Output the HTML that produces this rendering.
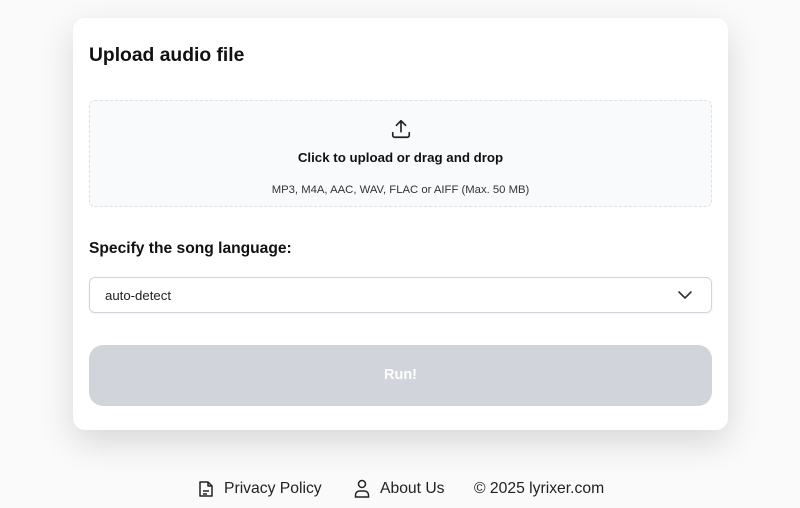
<!DOCTYPE html>
<html><head><style>
body{margin:0;width:800px;height:508px;background:#fafafa;font-family:"Liberation Sans",sans-serif;position:relative;overflow:hidden}
.card{position:absolute;left:73px;top:18px;width:655px;height:412px;background:#fff;border-radius:12px;box-shadow:0 12px 34px rgba(0,0,0,.14)}
h1{position:absolute;left:16px;top:27px;margin:0;font-size:19.3px;font-weight:bold;color:#111}
.drop{position:absolute;left:16px;top:82px;width:621px;height:105px;border:1px dashed #dde1e6;border-radius:6px;background:#f9fafb;text-align:center}
.t1{position:absolute;top:49px;width:100%;font-size:13.3px;font-weight:bold;color:#111}
.t2{position:absolute;top:83px;width:100%;font-size:11.3px;color:#333}
.lbl{position:absolute;left:16px;top:222px;font-size:15.6px;font-weight:bold;color:#111}
.sel{position:absolute;left:16px;top:259px;width:621px;height:34px;border:1px solid #d1d5db;border-radius:6px;box-shadow:0 1px 2px rgba(0,0,0,.06)}
.sel span{position:absolute;left:15px;top:10px;font-size:13.2px;color:#222}
.btn{position:absolute;left:16px;top:327px;width:623px;height:61px;border-radius:14px;background:#d1d5db;color:#fff;font-weight:bold;font-size:14.5px;text-align:center;line-height:61px}
.foot{position:absolute;top:480px;font-size:15.7px;color:#222}
</style></head><body>
<div class="card">
<h1>Upload audio file</h1>
<div class="drop">
<svg style="position:absolute;left:300px;top:17px" width="22" height="22" viewBox="0 0 24 24" fill="none" stroke="#222" stroke-width="1.8" stroke-linecap="round" stroke-linejoin="round"><path d="M12 15V3M7 8l5-5 5 5M3 16v3a2 2 0 0 0 2 2h14a2 2 0 0 0 2-2v-3"/></svg>
<div class="t1">Click to upload or drag and drop</div>
<div class="t2">MP3, M4A, AAC, WAV, FLAC or AIFF (Max. 50 MB)</div>
</div>
<div class="lbl">Specify the song language:</div>
<div class="sel"><span>auto-detect</span>
<svg style="position:absolute;right:18px;top:10px" width="16" height="14" viewBox="0 0 16 14" fill="none" stroke="#333" stroke-width="1.6" stroke-linecap="round" stroke-linejoin="round"><path d="M2 4l6 6 6-6"/></svg></div>
<div class="btn">Run!</div>
</div>
<svg style="position:absolute;left:198px;top:480px" width="16" height="18" viewBox="0 0 16 18" fill="none" stroke="#222" stroke-width="1.5" stroke-linejoin="round"><path d="M2 2h8l4 4v10H2z M10 2v4h4 M5 11h6 M5 14h4"/></svg>
<div class="foot" style="left:224px">Privacy Policy</div>
<svg style="position:absolute;left:354px;top:479px" width="16" height="19" viewBox="0 0 16 19" fill="none" stroke="#222" stroke-width="1.5"><circle cx="8" cy="5" r="3.5"/><path d="M1.5 18v-2a4 4 0 0 1 4-4h5a4 4 0 0 1 4 4v2z"/></svg>
<div class="foot" style="left:380px">About Us</div>
<div class="foot" style="left:474px">© 2025 lyrixer.com</div>
</body></html>
